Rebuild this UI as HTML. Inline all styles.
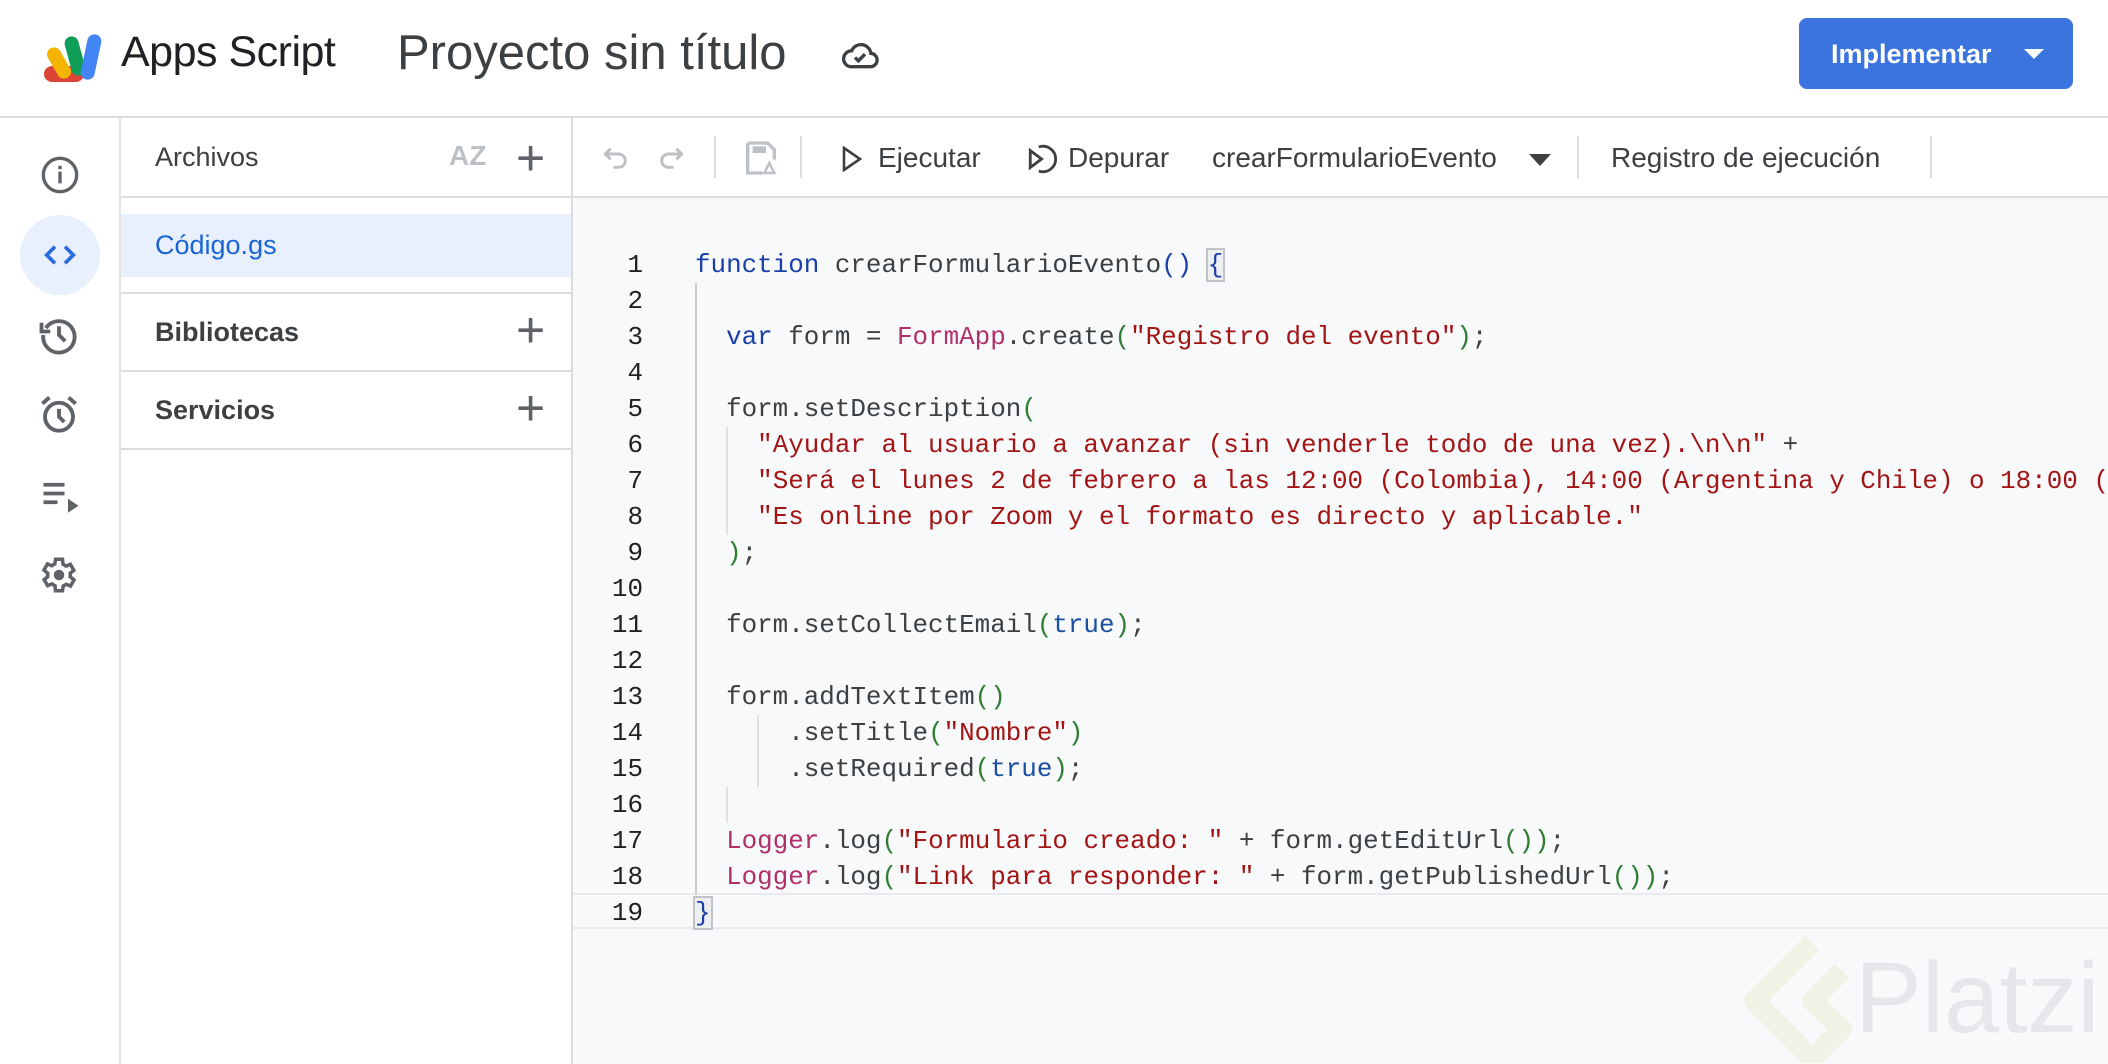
<!DOCTYPE html>
<html><head><meta charset="utf-8"><style>
*{margin:0;padding:0;box-sizing:border-box}
body{width:2108px;height:1064px;overflow:hidden;background:#fff;font-family:"Liberation Sans",Arial,sans-serif;position:relative;color:#3c4043}
.abs{position:absolute}
.hdr{left:0;top:0;width:2108px;height:118px;border-bottom:2px solid #dadce0}
.rail{left:0;top:118px;width:121px;height:946px;border-right:2px solid #e3e3e3}
.files{left:121px;top:118px;width:452px;height:946px;border-right:2px solid #dadce0}
.code{left:573px;top:198px;width:1535px;height:866px;background:#f8f9fa;overflow:hidden}
.tb{left:573px;top:118px;width:1535px;height:80px;border-bottom:2px solid #dadce0;background:#fff}
.mono{font-family:"Liberation Mono","DejaVu Sans Mono",monospace;font-size:25.9px;white-space:pre;line-height:36px}
.ln{position:absolute;left:0;width:70px;text-align:right;color:#202124}
.k{color:#1a3fa8}.s{color:#a31515}.c{color:#b0306a}.p{color:#2e7d32}.t{color:#1a4fa0}.b{color:#1a3fa8}
.sep{position:absolute;top:18px;width:2px;height:42px;background:#dadce0}
.tbt{position:absolute;top:0;line-height:80px;font-size:28px;color:#3c4043}
.r{position:relative;height:36px}
.x{position:absolute;left:122px}
</style></head><body>
<div class="abs hdr">
  <svg class="abs" style="left:42px;top:32px" width="68" height="54" viewBox="0 0 68 54">
    <rect x="2" y="34" width="40" height="16" rx="8" fill="#db4437"/>
    <rect x="10" y="14" width="14" height="34" rx="7" transform="rotate(-30 17 31)" fill="#f4b400"/>
    <rect x="26" y="4" width="14" height="40" rx="7" transform="rotate(-15 33 24)" fill="#0f9d58"/>
    <rect x="42" y="2" width="14" height="46" rx="7" transform="rotate(12 49 25)" fill="#4285f4"/>
  </svg>
  <div class="abs" style="left:121px;top:28px;font-size:43px;color:#202124;letter-spacing:-0.5px">Apps Script</div>
  <div class="abs" style="left:397px;top:25px;font-size:49px;color:#3c4043">Proyecto sin título</div>
  <svg class="abs" style="left:840px;top:40px" width="40" height="30" viewBox="0 0 24 18"><path d="M6 16h12a4 4 0 0 0 .5-8A6 6 0 0 0 7 6.5 4.8 4.8 0 0 0 6 16z" fill="none" stroke="#3c4043" stroke-width="2"/><path d="M9 10.5l2 2 4-4" fill="none" stroke="#3c4043" stroke-width="2"/></svg>
  <div class="abs" style="left:1799px;top:18px;width:274px;height:71px;background:#3b74df;border-radius:8px;color:#fff;font-size:27px;font-weight:bold">
    <span class="abs" style="left:32px;top:21px">Implementar</span>
    <span class="abs" style="left:225px;top:31px;width:0;height:0;border-left:10px solid transparent;border-right:10px solid transparent;border-top:10px solid #fff"></span>
  </div>
</div>
<div class="abs rail">
  <svg class="abs" style="left:40px;top:37px" width="40" height="40" viewBox="0 0 24 24"><circle cx="12" cy="12" r="10" fill="none" stroke="#5f6368" stroke-width="2"/><rect x="11" y="10" width="2" height="7" fill="#5f6368"/><rect x="11" y="6.5" width="2" height="2" fill="#5f6368"/></svg>
  <div class="abs" style="left:20px;top:97px;width:80px;height:80px;border-radius:50%;background:#e8f0fe"></div>
  <svg class="abs" style="left:40px;top:117px" width="40" height="40" viewBox="0 0 24 24"><path d="M9 7l-5 5 5 5M15 7l5 5-5 5" fill="none" stroke="#2b6be0" stroke-width="2.2"/></svg>
  <svg class="abs" style="left:38px;top:196px" width="42" height="42" viewBox="0 0 24 24"><path d="M4.5 8A9 9 0 1 1 3 12" fill="none" stroke="#5f6368" stroke-width="2.2"/><path d="M2 5v5h5" fill="none" stroke="#5f6368" stroke-width="2.2"/><path d="M12 7v5l3.5 3.5" fill="none" stroke="#5f6368" stroke-width="2.2"/></svg>
  <svg class="abs" style="left:38px;top:276px" width="42" height="42" viewBox="0 0 24 24"><circle cx="12" cy="13" r="8" fill="none" stroke="#5f6368" stroke-width="2.2"/><path d="M12 8.5v4.5l3 3M2.5 5.5l4-3.5M21.5 5.5l-4-3.5" fill="none" stroke="#5f6368" stroke-width="2.2"/></svg>
  <svg class="abs" style="left:40px;top:358px" width="42" height="42" viewBox="0 0 24 24"><path d="M2 5h12M2 10h12M2 15h8" stroke="#5f6368" stroke-width="2.2"/><path d="M16 13l6 4-6 4z" fill="#5f6368"/></svg>
  <svg class="abs" style="left:38px;top:436px" width="42" height="42" viewBox="0 0 24 24"><path d="M19.4 13a7.5 7.5 0 0 0 0-2l2.1-1.6-2-3.5-2.5 1a7 7 0 0 0-1.7-1L15 3h-4l-.4 2.7a7 7 0 0 0-1.7 1l-2.5-1-2 3.5L6.6 11a7.5 7.5 0 0 0 0 2l-2.1 1.6 2 3.5 2.5-1a7 7 0 0 0 1.7 1L11 21h4l.4-2.7a7 7 0 0 0 1.7-1l2.5 1 2-3.5z" transform="translate(-1 0)" fill="none" stroke="#5f6368" stroke-width="2"/><circle cx="12" cy="12" r="3" fill="#5f6368"/></svg>
</div>
<div class="abs files">
  <div class="abs" style="left:34px;top:24px;font-size:27px;color:#3c4043">Archivos</div>
  <div class="abs" style="left:328px;top:22px;font-size:28px;color:#bdc1c6;font-weight:bold">AZ</div>
  <div class="abs" style="left:395px;top:10px;font-size:50px;color:#5f6368;line-height:60px">+</div>
  <div class="abs" style="left:0;top:78px;width:450px;height:2px;background:#dadce0"></div>
  <div class="abs" style="left:0;top:96px;width:450px;height:63px;background:#e8f0fe"></div>
  <div class="abs" style="left:34px;top:112px;font-size:27px;color:#1a64d6">Código.gs</div>
  <div class="abs" style="left:0;top:174px;width:450px;height:2px;background:#dadce0"></div>
  <div class="abs" style="left:34px;top:199px;font-size:27px;color:#3c4043;font-weight:bold">Bibliotecas</div>
  <div class="abs" style="left:395px;top:182px;font-size:50px;color:#5f6368;line-height:60px">+</div>
  <div class="abs" style="left:0;top:252px;width:450px;height:2px;background:#dadce0"></div>
  <div class="abs" style="left:34px;top:277px;font-size:27px;color:#3c4043;font-weight:bold">Servicios</div>
  <div class="abs" style="left:395px;top:260px;font-size:50px;color:#5f6368;line-height:60px">+</div>
  <div class="abs" style="left:0;top:330px;width:450px;height:2px;background:#dadce0"></div>
</div>
<div class="abs tb">
  <svg class="abs" style="left:27px;top:24px" width="32" height="32" viewBox="0 0 24 24"><path d="M8 5L4 9l4 4M4 9h10a5 5 0 0 1 0 10h-4" fill="none" stroke="#bdc1c6" stroke-width="2.2"/></svg>
  <svg class="abs" style="left:82px;top:24px" width="32" height="32" viewBox="0 0 24 24"><path d="M16 5l4 4-4 4M20 9H10a5 5 0 0 0 0 10h4" fill="none" stroke="#bdc1c6" stroke-width="2.2"/></svg>
  <div class="sep" style="left:141px"></div>
  <svg class="abs" style="left:168px;top:20px" width="40" height="40" viewBox="0 0 24 24"><path d="M4 3h12l4 4v6M4 3v18h9" fill="none" stroke="#bdc1c6" stroke-width="2"/><rect x="7" y="5" width="8" height="4" fill="#bdc1c6"/><path d="M14 21l3-6 3 6z" fill="none" stroke="#bdc1c6" stroke-width="1.5"/></svg>
  <div class="sep" style="left:227px"></div>
  <svg class="abs" style="left:268px;top:28px" width="22" height="26" viewBox="0 0 22 26"><path d="M3 2l16 11L3 24z" fill="none" stroke="#3c4043" stroke-width="2.6"/></svg>
  <div class="tbt" style="left:305px">Ejecutar</div>
  <svg class="abs" style="left:453px;top:24px" width="34" height="34" viewBox="0 0 24 24"><path d="M3 6l8 6-8 6z" fill="none" stroke="#3c4043" stroke-width="2"/><path d="M9 3.5A9 9 0 1 1 9 20.5" fill="none" stroke="#3c4043" stroke-width="2"/></svg>
  <div class="tbt" style="left:495px">Depurar</div>
  <div class="tbt" style="left:639px">crearFormularioEvento</div>
  <span class="abs" style="left:956px;top:36px;width:0;height:0;border-left:11px solid transparent;border-right:11px solid transparent;border-top:12px solid #3c4043"></span>
  <div class="sep" style="left:1004px"></div>
  <div class="tbt" style="left:1038px">Registro de ejecución</div>
  <div class="sep" style="left:1357px"></div>
</div>
<div class="abs code">
  <div class="abs" style="left:0;top:695px;width:1535px;height:2px;background:#e8eaed"></div>
  <div class="abs" style="left:0;top:729px;width:1535px;height:2px;background:#e8eaed"></div>
  <div class="abs" style="left:122px;top:85px;width:2px;height:612px;background:#c8cacc"></div>
  <div class="abs" style="left:153px;top:229px;width:2px;height:108px;background:#e0e0e0"></div>
  <div class="abs" style="left:184px;top:517px;width:2px;height:72px;background:#e0e0e0"></div>
  <div class="abs" style="left:153px;top:589px;width:2px;height:36px;background:#e0e0e0"></div>
  <svg class="abs" style="left:1161px;top:735px" width="380" height="130" viewBox="0 0 380 130">
    <path d="M78 10L20 68l58 58 30-30-30-28 30-30" fill="none" stroke="#eef3e6" stroke-width="20" stroke-linejoin="round"/>
    <text x="121" y="99" font-family="Liberation Sans,sans-serif" font-size="100" fill="#e6e7ea">Platzi</text>
  </svg>
  <div class="abs mono" style="left:0;top:49px;width:1535px"><div class="r"><span class="ln">1</span><span class="x"><span class="k">function</span> crearFormularioEvento<span class="b">()</span> <span class="b" style="outline:2px solid #c0c4c8;background:#eceef0">{</span></span></div><div class="r"><span class="ln">2</span></div><div class="r"><span class="ln">3</span><span class="x">  <span class="k">var</span> form = <span class="c">FormApp</span>.create<span class="p">(</span><span class="s">"Registro del evento"</span><span class="p">)</span>;</span></div><div class="r"><span class="ln">4</span></div><div class="r"><span class="ln">5</span><span class="x">  form.setDescription<span class="p">(</span></span></div><div class="r"><span class="ln">6</span><span class="x">    <span class="s">"Ayudar al usuario a avanzar (sin venderle todo de una vez).\n\n"</span> +</span></div><div class="r"><span class="ln">7</span><span class="x">    <span class="s">"Será el lunes 2 de febrero a las 12:00 (Colombia), 14:00 (Argentina y Chile) o 18:00 (España)."</span></span></div><div class="r"><span class="ln">8</span><span class="x">    <span class="s">"Es online por Zoom y el formato es directo y aplicable."</span></span></div><div class="r"><span class="ln">9</span><span class="x">  <span class="p">)</span>;</span></div><div class="r"><span class="ln">10</span></div><div class="r"><span class="ln">11</span><span class="x">  form.setCollectEmail<span class="p">(</span><span class="t">true</span><span class="p">)</span>;</span></div><div class="r"><span class="ln">12</span></div><div class="r"><span class="ln">13</span><span class="x">  form.addTextItem<span class="p">()</span></span></div><div class="r"><span class="ln">14</span><span class="x">      .setTitle<span class="p">(</span><span class="s">"Nombre"</span><span class="p">)</span></span></div><div class="r"><span class="ln">15</span><span class="x">      .setRequired<span class="p">(</span><span class="t">true</span><span class="p">)</span>;</span></div><div class="r"><span class="ln">16</span></div><div class="r"><span class="ln">17</span><span class="x">  <span class="c">Logger</span>.log<span class="p">(</span><span class="s">"Formulario creado: "</span> + form.getEditUrl<span class="p">())</span>;</span></div><div class="r"><span class="ln">18</span><span class="x">  <span class="c">Logger</span>.log<span class="p">(</span><span class="s">"Link para responder: "</span> + form.getPublishedUrl<span class="p">())</span>;</span></div><div class="r"><span class="ln">19</span><span class="x"><span class="b" style="outline:2px solid #c0c4c8;background:#eceef0">}</span></span></div></div>
</div>
</body></html>
